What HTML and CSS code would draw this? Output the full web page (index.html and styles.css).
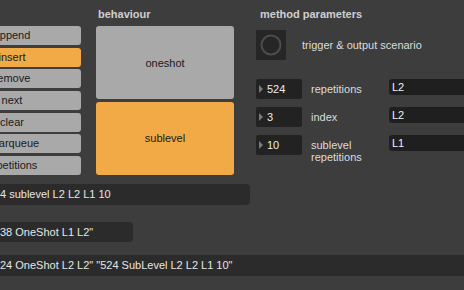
FILE: index.html
```html
<!DOCTYPE html>
<html lang="en">

<head>
    <meta charset="UTF-8">
    <meta name="viewport" content="width=device-width, initial-scale=1.0">
    <title>scenario patcher</title>
    <link rel="stylesheet" href="styles.css">
</head>

<body>
    <div class="top">
        <div class="col col-left">
            <div class="heading"></div>
            <div class="btn-list">
                <div class="btn">append</div>
                <div class="btn on">insert</div>
                <div class="btn">remove</div>
                <div class="btn">next</div>
                <div class="btn">clear</div>
                <div class="btn">clearqueue</div>
                <div class="btn">repetitions</div>
            </div>
        </div>

        <div class="col col-behaviour">
            <div class="heading">behaviour</div>
            <div class="mode-list">
                <div class="mode">oneshot</div>
                <div class="mode on">sublevel</div>
            </div>
        </div>

        <div class="col col-params">
            <div class="heading heading-params">method parameters</div>
            <div class="trigger">
                <div class="toggle">
                    <svg width="22" height="22" viewBox="0 0 22 22">
                        <circle cx="11" cy="11" r="9.5" fill="none" stroke="#4d4d4d" stroke-width="2" />
                    </svg>
                </div>
                <span class="trigger-label">trigger &amp; output scenario</span>
            </div>

            <div class="param">
                <div class="number"><span class="arrow"></span>524</div>
                <div class="param-label">repetitions</div>
                <div class="field">L2</div>
            </div>
            <div class="param">
                <div class="number"><span class="arrow"></span>3</div>
                <div class="param-label">index</div>
                <div class="field">L2</div>
            </div>
            <div class="param">
                <div class="number"><span class="arrow"></span>10</div>
                <div class="param-label">sublevel<br>repetitions</div>
                <div class="field">L1</div>
            </div>
        </div>
    </div>

    <div class="messages">
        <div class="msg msg-one">4 sublevel L2 L2 L1 10</div>
        <div class="msg msg-two">38 OneShot L1 L2"</div>
        <div class="msg msg-three">24 OneShot L2 L2" "524 SubLevel L2 L2 L1 10"</div>
    </div>
</body>

</html>
```

FILE: styles.css
```css
html,
body {
    margin: 0px;
    padding: 0px;
    height: 100%;
    overflow: hidden;
}

body {
    background-color: #3d3d3d;
    color: #e6e6e6;
    font-family: "Liberation Sans", Arial, sans-serif;
    font-size: 11px;
}

.top {
    margin-left: -57px;
    padding-top: 7px;
    display: flex;
}

.col {
    display: flex;
    flex-direction: column;
}

.col-left,
.col-behaviour {
    width: 138px;
    flex: none;
}

.col-behaviour {
    margin-left: 15px;
}

.col-params {
    margin-left: 22px;
    flex: 1;
}

.heading {
    height: 14px;
    margin-bottom: 5px;
    padding-left: 2px;
    line-height: 14px;
    font-weight: bold;
    color: #cfcfcf;
}

.heading-params {
    padding-left: 4px;
}

.btn-list {
    display: flex;
    flex-direction: column;
    gap: 2.67px;
}

.btn {
    height: 19px;
    line-height: 19px;
    text-align: center;
    color: #1a1a1a;
    background-color: #a9a9a9;
    border-radius: 3px;
}

.mode-list {
    display: flex;
    flex-direction: column;
    gap: 2.7px;
}

.mode {
    height: 73px;
    display: flex;
    align-items: center;
    justify-content: center;
    color: #1a1a1a;
    background-color: #a9a9a9;
    border-radius: 3px;
}

.on {
    background-color: #f2aa46;
}

.trigger {
    margin-top: 4px;
    display: flex;
    align-items: center;
}

.toggle {
    width: 30px;
    height: 30px;
    display: flex;
    align-items: center;
    justify-content: center;
    background-color: #262626;
}

.trigger-label {
    margin-left: 16px;
    color: #dcdcdc;
}

.param {
    margin-top: 8px;
    display: flex;
    align-items: flex-start;
}

.trigger + .param {
    margin-top: 19px;
}

.number {
    width: 46px;
    height: 20px;
    display: flex;
    align-items: center;
    flex: none;
    background-color: #222222;
    border-radius: 2px;
    color: #ececec;
}

.arrow {
    margin-left: 3px;
    margin-right: 4px;
    width: 0px;
    height: 0px;
    border-top: 4.5px solid transparent;
    border-bottom: 4.5px solid transparent;
    border-left: 4px solid #7a7a7a;
}

.param-label {
    width: 78px;
    margin-left: 9px;
    padding-top: 4px;
    line-height: 12px;
    flex: none;
    color: #dcdcdc;
}

.field {
    width: 90px;
    height: 16px;
    padding-left: 3px;
    line-height: 16px;
    flex: none;
    background-color: #1f1f1f;
    border-radius: 3px;
    color: #f0f0f0;
}

.messages {
    margin-left: -6px;
    margin-top: 9px;
    display: flex;
    flex-direction: column;
}

.msg {
    height: 21px;
    padding-left: 6px;
    line-height: 21px;
    background-color: #2b2b2b;
    border-radius: 4px;
    color: #e6e6e6;
}

.msg-one {
    width: 250px;
}

.msg-two {
    margin-top: 17px;
    width: 133px;
    height: 20px;
    line-height: 20px;
}

.msg-three {
    margin-top: 13px;
    width: 480px;
}
```
